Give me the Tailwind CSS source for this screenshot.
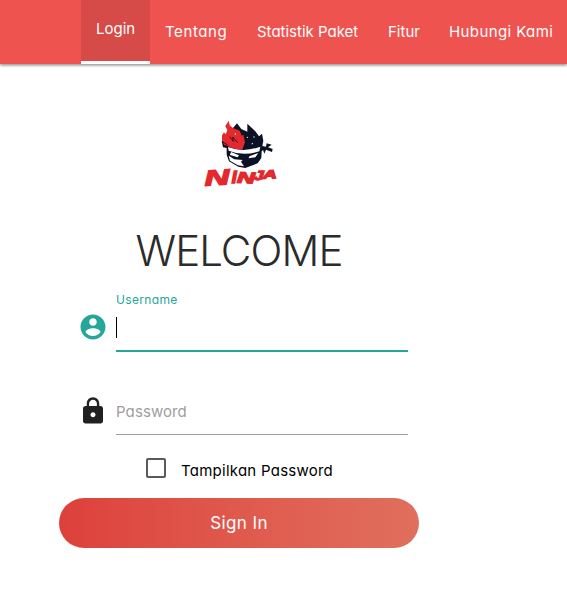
<!DOCTYPE html>
<html lang="id">
<head>
<meta charset="utf-8">
<title>Login</title>
<script src="https://cdn.jsdelivr.net/npm/@tailwindcss/browser@4"></script>
</head>
<body class="h-[593px] overflow-hidden bg-white font-['Inter',sans-serif] [font-feature-settings:'cv11']">
<nav class="flex h-16 bg-[#ef5350] pl-[81px] text-[15px] whitespace-nowrap text-white shadow-[0_2px_2px_0_rgba(0,0,0,0.14),0_1px_3px_0_rgba(0,0,0,0.35)]">
  <a class="h-16 w-[69px] border-b-[3px] border-white bg-[#d64b48] pl-[15px] leading-[58px] tracking-[0px]">Login</a>
  <a class="w-[92px] pl-[15px] leading-[64px] tracking-[0.6px]">Tentang</a>
  <a class="w-[131px] pl-[15px] leading-[64px] tracking-[0px]">Statistik Paket</a>
  <a class="w-[61px] pl-[15px] leading-[64px] tracking-[0px]">Fitur</a>
  <a class="pl-[15px] leading-[64px] tracking-[0.4px]">Hubungi Kami</a>
</nav>
<main class="ml-[59px] w-[360px] pt-12">
  <svg class="ml-[136px] h-20 w-[90px]" viewBox="0 0 270 240" aria-label="Ninja">
    <path fill="#0c1226" d="M112 50 126 34 139 51 157 59 157 35 181 58 192 73 201 65 205 86 202 102 213 104 215 94 230 98 219 106 233 111 231 120 213 113 208 125 204 114 200 118 199 138 188 154 151 168 130 164 102 148 95 128 95 108 84 106 80 86 98 98 116 84Z"/>
    <path fill="#fff" d="M99 105Q146 123 196 104L193 118Q146 134 101 116ZM101 131 118 142 143 144 138 149 147 163 129 160 105 146ZM108 120 132 130 128 136 105 129ZM163 133 190 123 181 136 161 139Z"/>
    <path fill="#e3292e" d="M101 26 104 40 115 49 134 56 140 71 145 68 150 91 142 113Q115 112 97 101L88 99 81 85 81 70 87 61 92 67 97 55 91 42Z"/>
    <path d="M81 88 98 99M104 74 115 88 113 75 128 92" fill="none" stroke="#0c1226" stroke-width="2.500"/>
    <g fill="#fff"><circle cx="121" cy="66" r="2"/><circle cx="157" cy="76" r="2"/><circle cx="177" cy="75" r="2"/><circle cx="172" cy="95" r="2"/></g>
    <g fill="#e3292e" stroke="#e3292e" stroke-width="3.500" font-family="Liberation Sans" font-weight="700" font-style="italic">
      <text font-size="56" transform="translate(30 221) rotate(-4) scale(1.85 1.150)">N</text>
      <text font-size="40" transform="translate(110 213) scale(1.300 1.200)">I</text>
      <text font-size="42" transform="translate(126 212) rotate(2) scale(1.75 1.100)">N</text>
      <text font-size="36" transform="translate(176 204) scale(1.5 1.120)">J</text>
      <text font-size="36" transform="translate(204 200) rotate(-2) scale(1.6 1)">A</text>
    </g>
  </svg>
  <h1 class="mt-[34px] h-[50px] text-center text-[42px] leading-[50px] font-light tracking-[-0.9px] text-[#2b2b2b]">WELCOME</h1>
  <div class="mt-[14px] flex h-[62px]">
    <svg class="mt-[22px] ml-[19px] h-[30px] w-[30px] shrink-0" viewBox="0 0 24 24" fill="#26a69a"><path d="M12 2C6.480 2 2 6.480 2 12s4.480 10 10 10 10-4.480 10-10S17.520 2 12 2zm0 3c1.660 0 3 1.340 3 3s-1.340 3-3 3-3-1.340-3-3 1.340-3 3-3zm0 14.200c-2.500 0-4.710-1.280-6-3.220.03-1.990 4-3.080 6-3.080 1.990 0 5.970 1.090 6 3.080-1.290 1.940-3.500 3.220-6 3.220z"/></svg>
    <div class="ml-[8px] w-[292px] border-b-2 border-[#26a69a]">
      <label class="block h-[27px] text-[12px] leading-[19px] tracking-[0.35px] text-[#26a69a]">Username</label>
      <div class="h-[21px] w-px bg-black"></div>
    </div>
  </div>
  <div class="mt-[34px] flex h-[49px]">
    <svg class="mt-[10px] ml-[19px] h-[30px] w-[30px] shrink-0" viewBox="0 0 24 24" fill="#212121"><path d="M18 8h-1V6c0-2.760-2.240-5-5-5S7 3.240 7 6v2H6c-1.100 0-2 .9-2 2v10c0 1.100.9 2 2 2h12c1.100 0 2-.9 2-2V10c0-1.100-.9-2-2-2zm-6 9c-1.100 0-2-.9-2-2s.9-2 2-2 2 .9 2 2-.9 2-2 2zm3.100-9H8.900V6c0-1.710 1.390-3.100 3.100-3.100s3.100 1.390 3.100 3.100v2z"/></svg>
    <div class="ml-[8px] w-[292px] border-b border-[#9e9e9e] text-[15px] leading-[51px] tracking-[0.1px] text-[#9e9e9e]">Password</div>
  </div>
  <label class="mt-[23px] flex h-[20px] pl-[87px]">
    <span class="h-5 w-5 rounded-[2px] border-2 border-[#5a5a5a]"></span>
    <span class="ml-[15px] text-[15px] leading-[26px] tracking-[0.25px] whitespace-nowrap text-black">Tampilkan Password</span>
  </label>
  <button class="mt-[20px] block h-[50px] w-[360px] rounded-full bg-linear-to-r from-[#dd403b] to-[#e06f5e] text-[17px] leading-[48px] tracking-[0.4px] text-white">Sign In</button>
</main>
</body>
</html>
